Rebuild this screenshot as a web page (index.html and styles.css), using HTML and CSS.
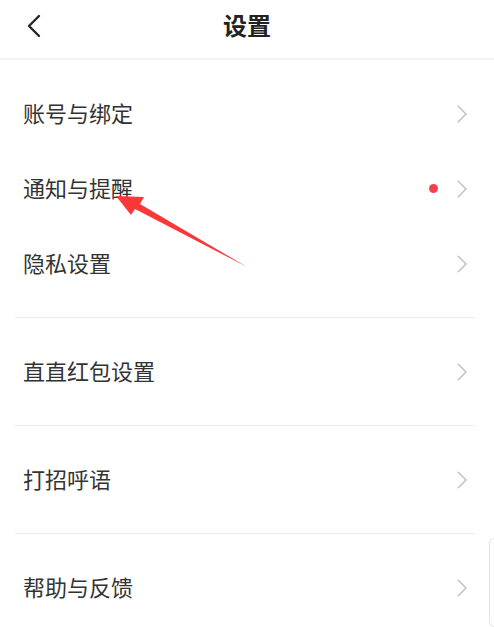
FILE: index.html
```html
<!DOCTYPE html>
<html lang="zh-CN">
<head>
<meta charset="utf-8">
<title>设置</title>
<link rel="stylesheet" href="styles.css">
</head>
<body>
<div class="page">
  <header class="topbar">
    <svg class="back" width="16" height="24" viewBox="0 0 16 24"><path d="M13 2 L3 12 L13 22" fill="none" stroke="#262626" stroke-width="2.4" stroke-linecap="round" stroke-linejoin="round"/></svg>
    <h1 class="title">设置</h1>
  </header>

  <section class="group">
    <div class="row"><span class="label">账号与绑定</span><span class="chev"></span></div>
    <div class="row"><span class="label">通知与提醒</span><span class="dot"></span><span class="chev"></span></div>
    <div class="row"><span class="label">隐私设置</span><span class="chev"></span></div>
  </section>
  <hr class="divider">
  <section class="group">
    <div class="row"><span class="label">直直红包设置</span><span class="chev"></span></div>
  </section>
  <hr class="divider">
  <section class="group">
    <div class="row"><span class="label">打招呼语</span><span class="chev"></span></div>
  </section>
  <hr class="divider">
  <section class="group">
    <div class="row"><span class="label">帮助与反馈</span><span class="chev"></span></div>
  </section>

  <svg class="arrow" width="494" height="627" viewBox="0 0 494 627"><polygon points="116,196 144,197 140,204 247,267 135,209 131,215" fill="#fb3838"/></svg>
  <div class="scrollhint"></div>
</div>
</body>
</html>
```

FILE: styles.css
```css
html, body {
  margin: 0;
  padding: 0;
  background: #ffffff;
}
body {
  font-family: "Noto Sans CJK SC", "Noto Sans", sans-serif;
  color: #333333;
}
.page {
  position: relative;
  width: 494px;
  height: 627px;
  overflow: hidden;
}
.topbar {
  position: relative;
  height: 58px;
  border-bottom: 2px solid #f3f3f3;
  display: flex;
  align-items: center;
  justify-content: center;
}
.back {
  position: absolute;
  left: 26px;
  top: 14px;
}
.title {
  margin: 0 0 8px 0;
  font-size: 24px;
  font-weight: 700;
  color: #222222;
  line-height: 1;
}
.group {
  padding: 16px 0;
}
.row {
  height: 75px;
  display: flex;
  align-items: center;
  padding: 0 27px 0 23px;
}
.label {
  flex: 1;
  font-size: 22px;
  line-height: 1;
  color: #333333;
  margin-bottom: 4px;
}
.dot {
  width: 9px;
  height: 9px;
  border-radius: 50%;
  background: #f5404c;
  margin-right: 19px;
}
.chev {
  width: 10px;
  height: 18px;
  background: no-repeat center / 10px 18px url("data:image/svg+xml,%3Csvg xmlns='http://www.w3.org/2000/svg' width='10' height='18' viewBox='0 0 10 18'%3E%3Cpath d='M0.8 0.8 L9 9 L0.8 17.2' fill='none' stroke='%23bcbcbc' stroke-width='1.3'/%3E%3C/svg%3E");
}
.divider {
  margin: 0 19px 0 15px;
  border: 0;
  border-top: 1px solid #ececec;
  height: 0;
}
.arrow {
  position: absolute;
  left: 0;
  top: 0;
  pointer-events: none;
}
.scrollhint {
  position: absolute;
  left: 489px;
  top: 538px;
  width: 12px;
  height: 87px;
  border: 1px solid #e4e4e4;
  border-radius: 5px;
  background: #fdfdfd;
}
```
